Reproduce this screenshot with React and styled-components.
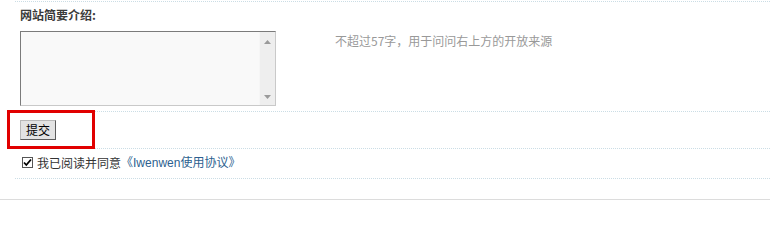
import React from "react";
import styled, { createGlobalStyle } from "styled-components";

const Global = createGlobalStyle`
  html, body { margin: 0; padding: 0; background: #fff; }
  body {
    font-family: "Noto Sans CJK SC", "Liberation Sans", sans-serif;
    font-size: 12px;
    color: #333;
  }
`;

const Page = styled.div`
  width: 770px;
  height: 200px;
  padding-top: 1px;
  box-sizing: border-box;
  display: flex;
  flex-direction: column;
`;

const Form = styled.div`
  margin-left: 15px;
  border-top: 1px dotted #cbdde5;
`;

const Row = styled.div`
  position: relative;
  border-bottom: 1px dotted #cbdde5;
  padding: ${(p) => p.$pad || "0"};
  padding-left: 5px;
`;

const Label = styled.div`
  font-weight: bold;
  color: #3a3a3a;
  line-height: 16px;
  margin-bottom: 8px;
`;

const FieldLine = styled.div`
  display: flex;
  align-items: flex-start;
  gap: 59px;
`;

const TextBox = styled.div`
  width: 256px;
  height: 75px;
  box-sizing: border-box;
  display: flex;
  border: 1px solid;
  border-color: #7b7b7b #c9c9c9 #c9c9c9 #7b7b7b;
  background: #f9f9f9;
`;

const Area = styled.textarea`
  flex: 1;
  border: none;
  outline: none;
  resize: none;
  background: transparent;
  margin: 0;
  padding: 2px;
  font: inherit;
`;

const Scroll = styled.div`
  width: 16px;
  background: #eeeeee;
  border-left: 1px solid #f6f6f6;
  display: flex;
  flex-direction: column;
  justify-content: space-between;
  align-items: center;
  padding: 8px 0 6px;
  box-sizing: border-box;
`;

const Hint = styled.div`
  color: #999;
  line-height: 16px;
  margin-top: 2px;
`;

const Button = styled.button`
  width: 36px;
  height: 20px;
  padding: 0;
  margin: 0;
  box-sizing: border-box;
  background: #e3e3e3;
  border: 1px solid;
  border-color: #b8b8b8 #5c5c5c #5c5c5c #b8b8b8;
  font-family: "Noto Sans CJK SC", sans-serif;
  font-size: 12px;
  color: #000;
  line-height: 16px;
  display: block;
`;

const Highlight = styled.div`
  position: absolute;
  left: -8px;
  top: -2px;
  width: 88px;
  height: 39px;
  box-sizing: border-box;
  border: 3px solid #e10000;
  pointer-events: none;
`;

const CheckLine = styled.div`
  display: flex;
  align-items: center;
  line-height: 16px;
`;

const Box = styled.span`
  width: 11px;
  height: 11px;
  box-sizing: border-box;
  border: 1px solid #555;
  background: #fff;
  margin: 0 4px 0 2px;
  display: inline-flex;
  align-items: center;
  justify-content: center;
`;

const Link = styled.a`
  color: #2d5f8f;
  text-decoration: none;
`;

const Latin = styled.span`
  font-family: "Liberation Sans", sans-serif;
`;

const Footer = styled.div`
  margin-top: auto;
  border-bottom: 1px solid #dcdcdc;
`;

const Arrow = ({ up }) => (
  <svg width="7" height="4" viewBox="0 0 7 4">
    <polygon points={up ? "3.5,0 7,4 0,4" : "0,0 7,0 3.5,4"} fill="#9a9a9a" />
  </svg>
);

export default function App() {
  return (
    <>
      <Global />
      <Page>
        <Form>
          <Row $pad="5px 0 5px">
            <Label>网站简要介绍:</Label>
            <FieldLine>
              <TextBox>
                <Area />
                <Scroll>
                  <Arrow up />
                  <Arrow />
                </Scroll>
              </TextBox>
              <Hint>不超过57字，用于问问右上方的开放来源</Hint>
            </FieldLine>
          </Row>
          <Row $pad="8px 0 8px">
            <Button>提交</Button>
            <Highlight />
          </Row>
          <Row $pad="5px 0 7px">
            <CheckLine>
              <Box>
                <svg width="9" height="9" viewBox="0 0 9 9">
                  <path d="M1 4.5 L3.3 7 L8 1.5" stroke="#000" strokeWidth="1.8" fill="none" />
                </svg>
              </Box>
              我已阅读并同意
              <Link href="#">《<Latin>Iwenwen</Latin>使用协议》</Link>
            </CheckLine>
          </Row>
        </Form>
        <Footer />
      </Page>
    </>
  );
}
